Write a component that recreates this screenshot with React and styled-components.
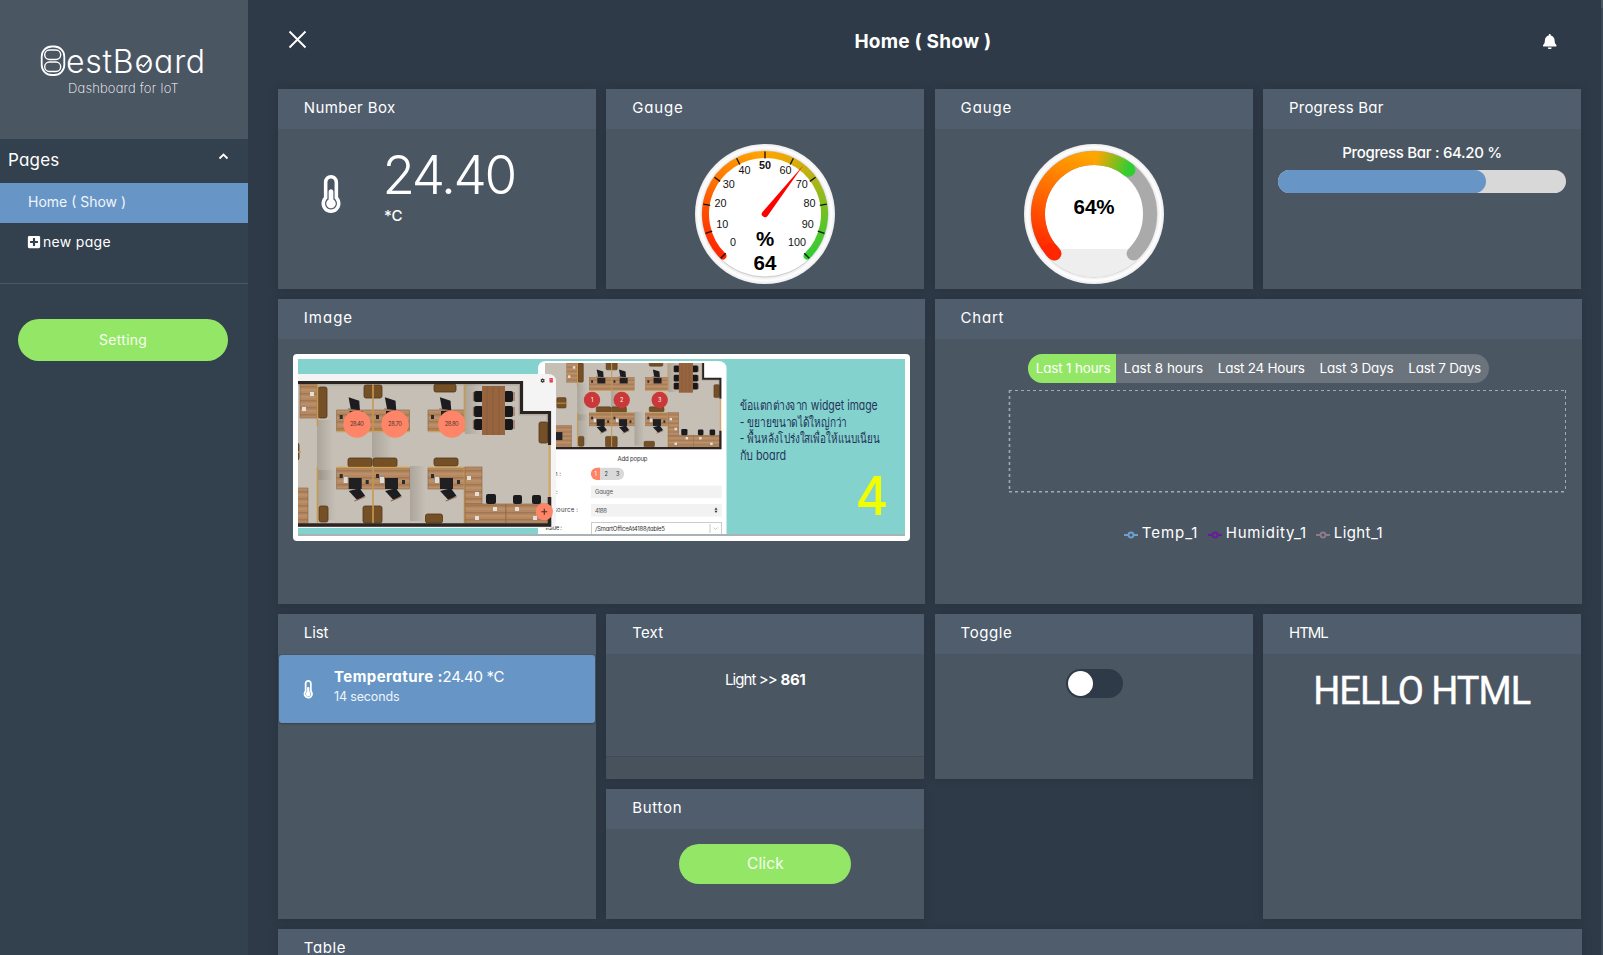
import React from 'react';
import styled, { createGlobalStyle } from 'styled-components';
import { FaThermometerHalf, FaBell, FaPlusSquare, FaCog, FaTrash } from 'react-icons/fa';

const c = {
  page: '#2f3a48',
  side: '#33404d',
  card: '#4b5663',
  head: '#505d6d',
  blue: '#6796c6',
  green: '#94e766',
};

const Global = createGlobalStyle`
  * { box-sizing: border-box; }
  html, body { margin: 0; height: 955px; overflow: hidden; background: ${c.page}; }
  body {
    font-family: Inter, "Open Sans", sans-serif;
    font-feature-settings: "cv11";
    font-size: 15px;
    color: #fff;
  }
`;

const Shell = styled.div`
  display: flex;
  width: 1603px;
  height: 955px;
  overflow: hidden;
  background: ${c.page};
`;

const Text = styled.span`
  display: inline-block;
  white-space: pre;
  letter-spacing: ${(p) => p.$ls || 0}px;
  margin-right: ${(p) => -(p.$ls || 0)}px;
`;

/* ---------- sidebar ---------- */
const Sidebar = styled.aside`
  width: 248px;
  flex: none;
  background: ${c.side};
`;

const Brand = styled.div`
  height: 139px;
  padding: 45px 0 0 40px;
  background: ${c.card};
`;

const BrandName = styled.div`
  display: flex;
  align-items: flex-start;
  height: 34px;
  font-size: 32px;
  line-height: 34px;
  font-weight: 300;
`;

const BrandMark = styled.svg`
  width: 26px;
  height: 32px;
  flex: none;
`;

const BrandWord = styled.span`
  display: flex;
  position: relative;
  letter-spacing: 0.75px;
`;

const BrandTrend = styled.svg`
  position: absolute;
  left: 68px;
  top: 10px;
  width: 18px;
  height: 18px;
`;

const Tagline = styled.div`
  padding-left: 28px;
  font-size: 13px;
  line-height: 18px;
  font-weight: 200;
`;

const SectionHead = styled.div`
  display: flex;
  justify-content: space-between;
  height: 44px;
  padding: 0 19px 0 8px;
  font-size: 17px;
  line-height: 43px;
`;

const Caret = styled.svg`
  width: 11px;
  height: 7px;
  margin-top: 14px;
`;

const NavItem = styled.div`
  display: flex;
  align-items: center;
  gap: 2px;
  height: 40px;
  padding: 0 0 3px ${(p) => (p.$active ? 28 : 27)}px;
  font-size: 14px;
  color: ${(p) => (p.$active ? '#f1f5fa' : '#fff')};
  background: ${(p) => (p.$active ? c.blue : 'transparent')};
`;

const Divider = styled.div`
  height: 1px;
  margin: 20px 0 35px;
  background: #4a5765;
`;

const PillButton = styled.div`
  display: flex;
  align-items: center;
  justify-content: center;
  width: ${(p) => p.$w}px;
  height: ${(p) => p.$h}px;
  padding-bottom: ${(p) => p.$lift || 0}px;
  border-radius: 21px;
  background: ${c.green};
  font-size: ${(p) => p.$size}px;
  color: #f6fdf1;
`;

const SideAction = styled.div`
  padding-left: 18px;
`;

/* ---------- main ---------- */
const Main = styled.main`
  flex: 1;
  padding: 0 19px 0 30px;
  min-width: 0;
`;

const ScrollTrack = styled.div`
  width: 2px;
  flex: none;
  background: linear-gradient(#4b5663 0 8px, #3c4755 8px);
`;

const TopBar = styled.header`
  display: grid;
  grid-template-columns: 1fr auto 1fr;
  align-items: center;
  height: 89px;
  padding: 0 24.6px 6px 10.2px;
`;

const Title = styled.h1`
  margin: 0;
  font-size: 19px;
  font-weight: 700;
`;

const CloseIcon = styled.svg`
  width: 19px;
  height: 19px;
  margin-top: -4px;
`;

const Bell = styled(FaBell)`
  justify-self: end;
  font-size: 15.5px;
`;

const Board = styled.div`
  display: grid;
  width: 1303.6px;
  grid-template-columns: repeat(4, 1fr);
  grid-auto-rows: 25px;
  gap: 10px;
`;

const Card = styled.section`
  display: flex;
  flex-direction: column;
  min-width: 0;
  width: ${(p) => (String(p.$col).includes('span') ? 'auto' : '318px')};
  grid-column: ${(p) => p.$col};
  grid-row: ${(p) => p.$row};
  background: ${c.card};
  box-shadow: 0 0 10px rgba(0, 0, 0, 0.15);
`;

const CardHead = styled.div`
  flex: none;
  height: 40px;
  padding-left: 25.8px;
  line-height: 37px;
  font-size: 15px;
  background: ${c.head};
`;

const CardBody = styled.div`
  flex: 1;
  min-height: 0;
  padding: ${(p) => p.$pad || '15px'};
  display: flex;
  flex-direction: ${(p) => (p.$rowwise ? 'row' : 'column')};
  align-items: ${(p) => p.$align || 'center'};
`;

const CardFoot = styled.div`
  height: 23px;
  background: #48525d;
  border-top: 1px solid #404a56;
`;

function Panel({ title, ls, col, row, children, foot, pad, align, rowwise }) {
  return (
    <Card $col={col} $row={row}>
      <CardHead>
        <Text $ls={ls}>{title}</Text>
      </CardHead>
      <CardBody $pad={pad} $align={align} $rowwise={rowwise}>{children}</CardBody>
      {foot && <CardFoot />}
    </Card>
  );
}

const BigThermo = styled(FaThermometerHalf)`
  flex: none;
  font-size: 38px;
  margin: 32px 34px 0 0;
`;

const Reading = styled.div`
  display: flex;
  flex-direction: column;
`;

const ReadingValue = styled.div`
  font-size: 53px;
  line-height: 64px;
  font-weight: 300;
  margin-left: -1.5px;
`;

const ReadingUnit = styled.div`
  font-size: 15px;
  line-height: 18px;
  font-weight: 500;
`;

const GaugeSvg = styled.svg`
  width: 140px;
  height: 140px;
  flex: none;
  font-family: "Liberation Sans", Arial, sans-serif;
`;

const ProgressLabel = styled.div`
  font-size: 15px;
  line-height: 18px;
  font-weight: 500;
`;

const Track = styled.div`
  width: 288px;
  height: 23px;
  margin-top: 8px;
  border-radius: 12px;
  overflow: hidden;
  background: #d8d8d8;
`;

const Fill = styled.div`
  width: ${(p) => p.$w}px;
  height: 100%;
  border-radius: 0 12px 12px 0;
  background: ${c.blue};
`;

const ImageFrame = styled.div`
  width: 617px;
  height: 187px;
  border: 5px solid #fff;
  border-radius: 4px;
  background: #fff;
  svg { display: block; }
`;

const Scene = styled.svg`
  width: 607px;
  height: 177px;
`;

const Ranges = styled.div`
  display: flex;
  height: 29px;
  margin-left: 93px;
  border-radius: 15px;
  overflow: hidden;
  background: #6b747c;
  font-size: 13.5px;
  line-height: 28px;
`;

const Range = styled.div`
  padding: 0 8px;
  width: ${(p) => p.$w}px;
  background: ${(p) => (p.$on ? c.green : 'transparent')};
`;

const PlotSvg = styled.svg`
  width: 560px;
  height: 106px;
  margin: 6px 0 0 72.6px;
`;

const Legend = styled.div`
  display: flex;
  align-items: center;
  margin: 28px 0 0 189px;
  line-height: 20px;
`;

const LegendItem = styled.div`
  display: flex;
  align-items: center;
  width: ${(p) => p.$w}px;
  gap: 4px;
  svg { width: 14px; height: 14px; margin-top: 3px; }
`;

const ListItem = styled.div`
  display: flex;
  align-self: stretch;
  height: 68px;
  border-radius: 3px;
  background: ${c.blue};
  box-shadow: 0 1px 2px rgba(0, 0, 0, 0.25);
`;

const SmallThermo = styled(FaThermometerHalf)`
  font-size: 18.5px;
  margin: 25px 16.5px 0 20px;
`;

const ItemCopy = styled.div`
  padding-top: 12px;
  line-height: 20px;
`;

const Small = styled.div`
  font-size: 12.5px;
  color: #eef4fa;
`;

const Strong = styled(Text)`
  font-weight: 700;
`;

const Line = styled.div`
  display: flex;
  gap: ${(p) => p.$gap || 0}px;
  margin-top: ${(p) => p.$drop || 0}px;
  line-height: 20px;
`;

const Switch = styled.div`
  width: 57px;
  height: 29px;
  margin-left: 1px;
  padding: 2px;
  border-radius: 15px;
  background: ${c.page};
`;

const Knob = styled.div`
  width: 25px;
  height: 25px;
  border-radius: 50%;
  background: #fff;
`;

const Hello = styled.h1`
  margin: 0;
  font-family: Roboto, sans-serif;
  font-size: 38px;
  line-height: 44px;
  font-weight: 400;
  -webkit-text-stroke: 0.4px #fff;
`;

/* ---------- drawings ---------- */
const polar = (r, deg) => {
  const a = ((deg - 90) * Math.PI) / 180;
  return [r * Math.cos(a), r * Math.sin(a)];
};
const arc = (r, a, b) => {
  const [x1, y1] = polar(r, a);
  const [x2, y2] = polar(r, b);
  return `M${x1} ${y1}A${r} ${r} 0 ${b - a > 180 ? 1 : 0} 1 ${x2} ${y2}`;
};

function Bezel({ id }) {
  return (
    <>
      <defs>
        <radialGradient id={id}>
          <stop offset=".89" stopColor="#e4e4e6" />
          <stop offset=".95" stopColor="#ffffff" />
          <stop offset="1" stopColor="#ececee" />
        </radialGradient>
      </defs>
      <circle r="70" fill={`url(#${id})`} />
      <circle r="63" fill="#fff" stroke="#b9babd" strokeWidth=".7" />
    </>
  );
}

const numerals = [
  [-32, 28.3], [-42.7, 10.3], [-44.5, -10.7], [-36.3, -29.7], [-20.5, -43.7], [0, -48.5],
  [20.5, -43.7], [36.7, -29.7], [44.5, -10.7], [42.7, 10.3], [32, 28.3],
];

function NeedleGauge() {
  return (
    <GaugeSvg viewBox="-70 -70 140 140">
      <Bezel id="bz1" />
      <defs>
        <linearGradient id="g1l" gradientUnits="userSpaceOnUse" x1="-42" y1="42" x2="0" y2="-60">
          <stop offset="0" stopColor="#ff2600" /><stop offset="1" stopColor="#ffa500" />
        </linearGradient>
        <linearGradient id="g1r" gradientUnits="userSpaceOnUse" x1="0" y1="-60" x2="42" y2="42">
          <stop offset="0" stopColor="#ffa500" /><stop offset="1" stopColor="#32cd32" />
        </linearGradient>
      </defs>
      <g fill="none" strokeWidth="7" strokeLinecap="round">
        <path d={arc(59.5, 0, 135)} stroke="url(#g1r)" />
        <path d={arc(59.5, -135, 0)} stroke="url(#g1l)" />
      </g>
      {numerals.map(([x, y], i) => {
        const [x1, y1] = polar(55.5, -135 + i * 27);
        const [x2, y2] = polar(62.5, -135 + i * 27);
        return (
          <g key={i}>
            <line x1={x1} y1={y1} x2={x2} y2={y2} stroke="#111" strokeWidth="1.3" />
            <text x={x} y={y + 3.6} textAnchor="middle" fontSize="10.8" fontWeight={i === 5 ? 700 : 400} fill="#111">{i * 10}</text>
          </g>
        );
      })}
      <g fontSize="20.5" fontWeight="700" textAnchor="middle">
        <text x="0" y="31.8">%</text>
        <text x="0" y="55.8">64</text>
      </g>
      <path d="M-2.5 -1.9L38.3 -48.7L2.5 1.9A3 3 0 1 1 -2.5 -1.9Z" fill="#f00" />
    </GaugeSvg>
  );
}

function ArcGauge() {
  return (
    <GaugeSvg viewBox="-70 -70 140 140">
      <Bezel id="bz2" />
      <defs>
        <linearGradient id="g2l" gradientUnits="userSpaceOnUse" x1="-38" y1="42" x2="0" y2="-56">
          <stop offset="0" stopColor="#ff2600" /><stop offset="1" stopColor="#ffa500" />
        </linearGradient>
        <linearGradient id="g2r" gradientUnits="userSpaceOnUse" x1="2" y1="-56" x2="34" y2="-45">
          <stop offset="0" stopColor="#ffa500" /><stop offset="1" stopColor="#32cd32" />
        </linearGradient>
      </defs>
      <path d="M-52.4 35H52.4A63 63 0 0 1 -52.4 35Z" fill="#eee" />
      <g fill="none" strokeWidth="14" strokeLinecap="round">
        <path d={arc(56, -135, 135)} stroke="#aaa" />
        <path d={arc(56, 0, 38)} stroke="url(#g2r)" />
        <path d={arc(56, -135, 0)} stroke="url(#g2l)" strokeLinecap="butt" />
        <path d={arc(56, -135, -130)} stroke="#ff2600" />
      </g>
      <text y="0.4" textAnchor="middle" fontSize="20.5" fontWeight="700">64%</text>
    </GaugeSvg>
  );
}

const Desk = ({ x, y, w, h }) => (
  <g>
    <rect x={x} y={y} width={w} height={h} fill="url(#wood)" />
    <rect x={x} y={y} width={w} height={h} fill="none" stroke="#8a6242" strokeWidth=".6" />
  </g>
);
const Cabinet = ({ x, y, w, h }) => <rect x={x} y={y} width={w} height={h} rx="2" fill="#755027" stroke="#523619" strokeWidth=".8" />;
const Seat = ({ x, y, r = 0 }) => (
  <g transform={`translate(${x} ${y}) rotate(${r})`}>
    <path d="M-6 -6L5 -4L7 5L-2 6Z" fill="#1d1d21" />
    <path d="M-5 5.5L7 6" stroke="#93674a" strokeWidth="1" />
  </g>
);
const Paper = ({ x, y }) => <rect x={x} y={y} width="4" height="4" fill="#e3e0dc" />;

function FloorPlan() {
  return (
    <g>
      <path d="M255 381H523V411H551V527H255Z" fill="#c5bfb5" />
      <path d="M255 384H520V414H548V440" fill="none" stroke="#8f877b" strokeWidth="3" opacity=".35" />
      <g fill="url(#shade)">
        <rect x="317" y="420" width="16" height="60" /><rect x="372" y="432" width="20" height="30" />
        <rect x="410" y="466" width="16" height="55" /><rect x="465" y="384" width="16" height="50" />
        <rect x="318" y="470" width="18" height="50" />
      </g>
      <Desk x={300} y={384} w={17} h={34} /><Cabinet x={318} y={387} w={9} h={31} />
      <Cabinet x={284} y={443} w={15} h={17} /><path d="M270 452H301" stroke="#c99b50" strokeWidth="1.5" />
      <Desk x={276} y={488} w={32} h={35} /><Cabinet x={319} y={506} w={9} h={16} />
      <rect x="276" y="499" width="17" height="13" fill="#252528" />
      <Cabinet x={364} y={385} w={18} h={13} /><Cabinet x={434} y={384} w={22} h={8} />
      <Cabinet x={348} y={458} w={24} h={9} /><Cabinet x={373} y={458} w={24} h={9} />
      <Cabinet x={434} y={458} w={24} h={8} /><Cabinet x={363} y={506} w={19} h={17} />
      <Cabinet x={425.5} y={514} w={17} h={9} /><Cabinet x={539} y={422} w={9} h={21} />
      {[336.7, 373, 428].map((x) => (
        <g key={x}>
          <Desk x={x} y={410} w={36.5} h={21} /><Desk x={x} y={468} w={36.5} h={21} />
          <path d={`M${x} 431.5h36.5M${x} 467.5h36.5`} stroke="#cfa256" strokeWidth="1.3" />
          <rect x={x + 13} y="411" width="13" height="9" fill="#202023" />
          <rect x={x + 12} y="478" width="13" height="11" fill="#202023" />
          <rect x={x + 3} y="474" width="3" height="4" fill="#2c2c2c" />
          <rect x={x + 7} y="477" width="4" height="6" fill="#d8dde2" />
          <rect x={x + 29} y="480" width="3" height="4" fill="#2c2c2c" />
          <rect x={x + 3} y="415" width="3" height="4" fill="#2c2c2c" />
          <Seat x={x + 17} y={404} r={8} /><Seat x={x + 20} y={494} r={-24} />
        </g>
      ))}
      <path d="M317.5 384V426M317.5 467V523M373 384V431M373 467V523M464.5 384V431M464.5 467V523" stroke="#c69a52" strokeWidth="1.6" />
      <Desk x={465} y={467} w={17} h={37} /><Desk x={465} y={504} w={41} h={19} /><Desk x={506} y={504} w={43} h={19} />
      {[389, 404, 417].map((y) => (
        <g key={y}>
          <rect x="474" y={y + 2} width="9" height="11" rx="2" fill="#17171a" /><rect x="504" y={y + 2} width="9" height="11" rx="2" fill="#17171a" />
          <path d={`M473.5 ${y + 3}v9M514 ${y + 3}v9`} stroke="#9a6852" strokeWidth="1.2" />
        </g>
      ))}
      <rect x="482" y="386" width="23" height="49" fill="#966540" />
      <path d="M487 386V435M493 386V435M499 386V435" stroke="#875833" strokeWidth=".7" />
      <rect x="486" y="494" width="10" height="10" rx="2" fill="#1b1b1e" /><rect x="513" y="495" width="9" height="9" rx="2" fill="#1b1b1e" /><rect x="532" y="495" width="9" height="9" rx="2" fill="#1b1b1e" />
      <Paper x={310} y={392} /><Paper x={302} y={407} /><Paper x={467} y={476} /><Paper x={475} y={492} />
      <Paper x={493} y={507} /><Paper x={515} y={507} /><Paper x={475} y={516} /><Paper x={533} y={516} />
      <path d="M255 382.5H521.5V412.5H549.5V445" fill="none" stroke="#2c2422" strokeWidth="3.2" />
      <path d="M549.5 445V497" stroke="#cfa866" strokeWidth="2" />
      <path d="M549.5 497V525H255" fill="none" stroke="#2c2422" strokeWidth="3.6" />
    </g>
  );
}

function OfficeScene() {
  return (
    <Scene viewBox="298 359 607 177">
      <defs>
        <pattern id="wood" width="9" height="7" patternUnits="userSpaceOnUse">
          <rect width="9" height="7" fill="#b38862" />
          <rect width="9" height="1.5" y="1" fill="#a27751" /><rect width="9" height="1" y="4.5" fill="#c29870" />
        </pattern>
        <linearGradient id="shade"><stop offset="0" stopColor="#6d675f" stopOpacity=".3" /><stop offset="1" stopColor="#6d675f" stopOpacity="0" /></linearGradient>
        <clipPath id="planTop"><rect x="545" y="363" width="177.5" height="87" /></clipPath>
      </defs>
      <rect x="298" y="359" width="607" height="177" fill="#83d2cd" />
      <path d="M538 536V369Q538 361 546 361H718Q726.5 361 726.5 369V536Z" fill="#fff" />
      <g clipPath="url(#planTop)"><g transform="translate(381.9 124.7) scale(.616)"><FloorPlan /></g></g>
      <g fontSize="5.5" fill="#fff" textAnchor="middle">
        {[[592, 1], [621.7, 2], [659.7, 3]].map(([x, n]) => (
          <g key={n}><circle cx={x} cy="400" r="8.2" fill="#cb3839" /><text x={x} y="402">{n}</text></g>
        ))}
      </g>
      <g fontSize="6" fill="#333">
        <text x="617.5" y="460.5" textLength="30">Add popup</text>
        <text x="554" y="475.5">n :</text><text x="556" y="493.5">:</text>
        <text x="550" y="512" textLength="28">esource :</text><text x="545" y="530" textLength="17">value :</text>
      </g>
      <path d="M597 467.7H618A6 6 0 0 1 618 480H597Z" fill="#d9d9d9" />
      <path d="M600 467.7V480H597A6 6 0 0 1 597 467.7Z" fill="#ff8466" />
      <g fontSize="5.5" fill="#333"><text x="594.5" y="476" fill="#fff">1</text><text x="604.5" y="476">2</text><text x="616" y="476">3</text></g>
      <rect x="591" y="485.7" width="130.7" height="12.5" fill="#f2f2f2" /><rect x="591" y="504" width="130.7" height="12.7" fill="#f2f2f2" />
      <rect x="591.5" y="522.5" width="130" height="16" fill="#fff" stroke="#ccc" />
      <g fontSize="6" fill="#555"><text x="595" y="494" textLength="18">Gauge</text><text x="595" y="512.5" textLength="12">4188</text></g>
      <text x="595" y="530.5" fontSize="6" fill="#333" textLength="70">/SmartOfficeAt4188/table5</text>
      <path d="M714.5 509.7L716 507.5L717.5 509.7ZM714.5 510.7L716 513L717.5 510.7Z" fill="#333" />
      <path d="M710 524V533M713.5 527.5L715.5 529.5L717.5 527.5" stroke="#bbb" strokeWidth=".8" fill="none" />
      <path d="M298 374H548Q556 374 556 382V521Q556 528 549 528H298Z" fill="#f4f4f4" />
      <FloorPlan />
      <g fontSize="5.8" fill="#54362d" textAnchor="middle">
        {[[357, '28.40'], [395, '28.70'], [451.7, '28.80']].map(([x, t]) => (
          <g key={t}><circle cx={x} cy="424.2" r="13.6" fill="#ff8568" /><text x={x} y="426" textLength="14">{t}</text></g>
        ))}
      </g>
      <circle cx="544.3" cy="511.7" r="8.6" fill="#ff8568" />
      <path d="M541.3 511.7H547.3M544.3 508.7V514.7" stroke="#4b2f28" strokeWidth="1.1" />
      <FaCog x="540.3" y="378.3" size="4.6" color="#333" />
      <FaTrash x="548.8" y="378" size="4.8" color="#e0405a" />
      <g fontSize="13" fill="#25325a">
        <text x="739.7" y="410.4" textLength="138" lengthAdjust="spacingAndGlyphs">ข้อแตกต่างจาก widget image</text>
        <text x="739.7" y="426.8" textLength="107" lengthAdjust="spacingAndGlyphs">- ขยายขนาดได้ใหญ่กว่า</text>
        <text x="739.7" y="443" textLength="140" lengthAdjust="spacingAndGlyphs">- พื้นหลังโปร่งใสเพื่อให้แนบเนียน</text>
        <text x="739.7" y="459.6" textLength="46.5" lengthAdjust="spacingAndGlyphs">กับ board</text>
      </g>
      <text x="855.5" y="515" fontSize="53" fontWeight="500" fill="#f0ff00" textLength="33" lengthAdjust="spacingAndGlyphs">4</text>
      <rect x="298" y="534" width="607" height="2" fill="#a9b3b3" />
    </Scene>
  );
}

const Marker = ({ color }) => (
  <svg viewBox="0 0 14 14">
    <path d="M0 7H4.5M9.5 7H14" stroke={color} strokeWidth="1.9" />
    <circle cx="7" cy="7" r="2.5" fill="none" stroke={color} strokeWidth="1.9" />
  </svg>
);

export default function App() {
  return (
    <Shell>
      <Global />
      <Sidebar>
        <Brand>
          <BrandName>
            <BrandMark viewBox="0 0 26 32" fill="none" stroke="#fff">
              <rect x="1.7" y="1.5" width="22.6" height="28.5" rx="10" strokeWidth="1.8" />
              <rect x="4.7" y="5" width="16" height="9.5" rx="4.7" strokeWidth="1.4" />
              <rect x="4.7" y="17" width="16" height="9.5" rx="4.7" strokeWidth="1.4" />
            </BrandMark>
            <BrandWord>
              estBoard
              <BrandTrend viewBox="0 0 18 18" fill="none" stroke="#fff" strokeWidth="1.4">
                <path d="M3 12L7 9.5L9.5 11.5L15 5" />
              </BrandTrend>
            </BrandWord>
          </BrandName>
          <Tagline><Text $ls={0.2}>Dashboard for IoT</Text></Tagline>
        </Brand>
        <SectionHead>
          <Text $ls={0.2}>Pages</Text>
          <Caret viewBox="0 0 11 7"><path d="M1.5 5.5L5.5 1.5L9.5 5.5" fill="none" stroke="#fff" strokeWidth="1.8" /></Caret>
        </SectionHead>
        <NavItem $active><Text>Home ( Show )</Text></NavItem>
        <NavItem><FaPlusSquare size={14} /><Text $ls={0.3}>new page</Text></NavItem>
        <Divider />
        <SideAction>
          <PillButton $w={210} $h={42} $size={14} $lift={2}><Text $ls={0.28}>Setting</Text></PillButton>
        </SideAction>
      </Sidebar>

      <Main>
        <TopBar>
          <CloseIcon viewBox="0 0 19 19"><path d="M1.5 1.5L17.5 17.5M17.5 1.5L1.5 17.5" stroke="#fff" strokeWidth="1.9" /></CloseIcon>
          <Title><Text $ls={0.22}>Home ( Show )</Text></Title>
          <Bell />
        </TopBar>

        <Board>
          <Panel title="Number Box" ls={0.4} col="1" row="1 / span 6" rowwise align="flex-start" pad="14px 34px">
            <BigThermo />
            <Reading>
              <ReadingValue><Text $ls={-2.4}>24.40</Text></ReadingValue>
              <ReadingUnit>*C</ReadingUnit>
            </Reading>
          </Panel>
          <Panel title="Gauge" ls={0.85} col="2" row="1 / span 6"><NeedleGauge /></Panel>
          <Panel title="Gauge" ls={0.85} col="3" row="1 / span 6"><ArcGauge /></Panel>
          <Panel title="Progress Bar" ls={0.21} col="4" row="1 / span 6">
            <ProgressLabel><Text $ls={-0.31}>Progress Bar : 64.20 %</Text></ProgressLabel>
            <Track><Fill $w={208} /></Track>
          </Panel>

          <Panel title="Image" ls={1} col="1 / span 2" row="7 / span 9"><ImageFrame><OfficeScene /></ImageFrame></Panel>
          <Panel title="Chart" ls={0.78} col="3 / span 2" row="7 / span 9" pad="15px 0 0 0" align="flex-start">
            <Ranges>
              <Range $on $w={88}><Text $ls={-0.19}>Last 1 hours</Text></Range>
              <Range $w={94}><Text $ls={-0.04}>Last 8 hours</Text></Range>
              <Range $w={101.7}><Text $ls={-0.25}>Last 24 Hours</Text></Range>
              <Range $w={88.8}><Text $ls={-0.19}>Last 3 Days</Text></Range>
              <Range $w={88.3}><Text $ls={-0.25}>Last 7 Days</Text></Range>
            </Ranges>
            <PlotSvg viewBox="0 0 560 106" fill="none" stroke="#a3abb0" strokeDasharray="3 3">
              <path d="M2 1.5H559" />
              <path d="M558.5 1V103" />
              <path d="M2.5 1V103" strokeWidth="1.6" />
              <path d="M2 102.8H559" strokeWidth="1.6" />
            </PlotSvg>
            <Legend>
              <LegendItem $w={84}><Marker color="#6f9fd0" /><Text $ls={0.95}>Temp_1</Text></LegendItem>
              <LegendItem $w={108}><Marker color="#6a1b9a" /><Text $ls={0.78}>Humidity_1</Text></LegendItem>
              <LegendItem $w={70}><Marker color="#8d7b8b" /><Text $ls={0.4}>Light_1</Text></LegendItem>
            </Legend>
          </Panel>

          <Panel title="List" ls={-0.11} col="1" row="16 / span 9" pad="1px">
            <ListItem>
              <SmallThermo />
              <ItemCopy>
                <Line><Strong $ls={0.45}>Temperature :</Strong><Text $ls={-0.3}>24.40 *C</Text></Line>
                <Small><Text $ls={-0.15}>14 seconds</Text></Small>
              </ItemCopy>
            </ListItem>
          </Panel>
          <Panel title="Text" ls={0.2} col="2" row="16 / span 5" foot>
            <Line $gap={3} $drop={1}><Text $ls={-0.95}>{'Light >>'}</Text><Strong $ls={-0.4}>861</Strong></Line>
          </Panel>
          <Panel title="Toggle" ls={0.57} col="3" row="16 / span 5"><Switch><Knob /></Switch></Panel>
          <Panel title="HTML" ls={-1} col="4" row="16 / span 9"><Hello><Text $ls={-1}>HELLO HTML</Text></Hello></Panel>
          <Panel title="Button" ls={0.71} col="2" row="21 / span 4">
            <PillButton $w={172} $h={40} $size={15.5} $lift={1}><Text $ls={0.1}>Click</Text></PillButton>
          </Panel>
          <Panel title="Table" ls={0.6} col="1 / span 4" row="25 / span 6" />
        </Board>
      </Main>
      <ScrollTrack />
    </Shell>
  );
}
